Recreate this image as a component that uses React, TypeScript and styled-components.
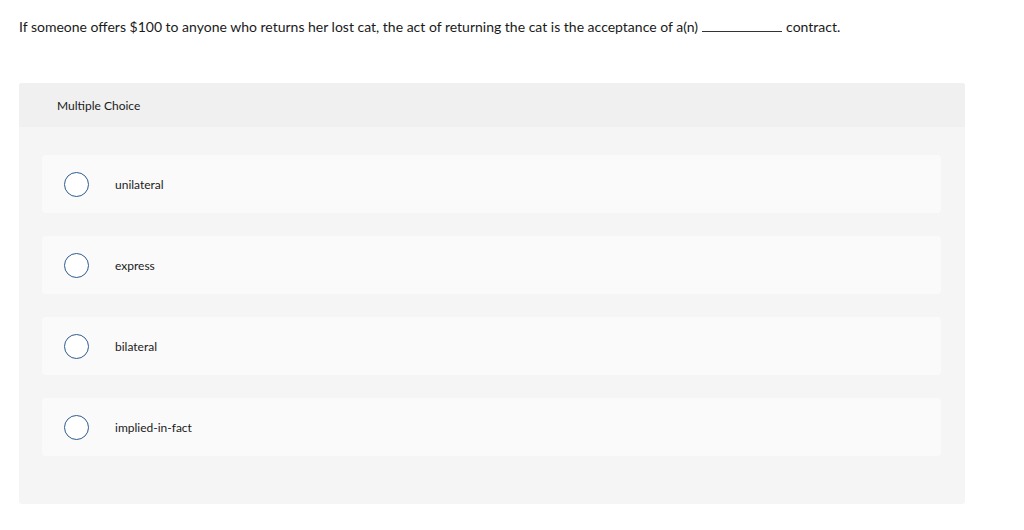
import React from 'react';
import styled, { createGlobalStyle } from 'styled-components';

const GlobalStyle = createGlobalStyle`
  body {
    margin: 0;
    background: #ffffff;
    font-family: Lato, "Open Sans", sans-serif;
    color: #1a1a1a;
  }
`;

const Page = styled.div`
  padding: 18px 59px 0 19px;
`;

const Question = styled.p`
  margin: 0;
  font-size: 14px;
  line-height: 18px;
  color: #1a1a1a;
`;

const Blank = styled.span`
  display: inline-block;
  width: 80px;
  border-bottom: 1px solid #333;
  margin: 0 4px;
  vertical-align: baseline;
`;

const Panel = styled.section`
  margin-top: 47px;
  background: #f5f5f5;
  border-radius: 3px;
  padding-bottom: 48px;
`;

const PanelHeader = styled.div`
  height: 44px;
  display: flex;
  align-items: center;
  padding-left: 38px;
  background: #f0f0f0;
  border-radius: 3px 3px 0 0;
  font-size: 12px;
  color: #1a1a1a;
`;

const OptionList = styled.div`
  display: flex;
  flex-direction: column;
  gap: 23px;
  padding: 28px 24px 0 23px;
`;

const Option = styled.label`
  display: flex;
  align-items: center;
  height: 58px;
  background: #fafafa;
  border-radius: 4px;
  padding-left: 22px;
  font-size: 12px;
  color: #1a1a1a;
  cursor: pointer;
`;

const Radio = styled.span`
  width: 23px;
  height: 23px;
  border: 1px solid #2d5b8e;
  border-radius: 50%;
  background: #fff;
  flex-shrink: 0;
  margin-right: 26px;
`;

const choices = ['unilateral', 'express', 'bilateral', 'implied-in-fact'];

const App: React.FC = () => {
  return (
    <>
      <GlobalStyle />
      <Page>
        <Question>
          If someone offers $100 to anyone who returns her lost cat, the act of returning the cat is the acceptance of a(n)
          <Blank />
          contract.
        </Question>
        <Panel>
          <PanelHeader>Multiple Choice</PanelHeader>
          <OptionList>
            {choices.map((choice) => (
              <Option key={choice}>
                <Radio />
                {choice}
              </Option>
            ))}
          </OptionList>
        </Panel>
      </Page>
    </>
  );
};

export default App;
